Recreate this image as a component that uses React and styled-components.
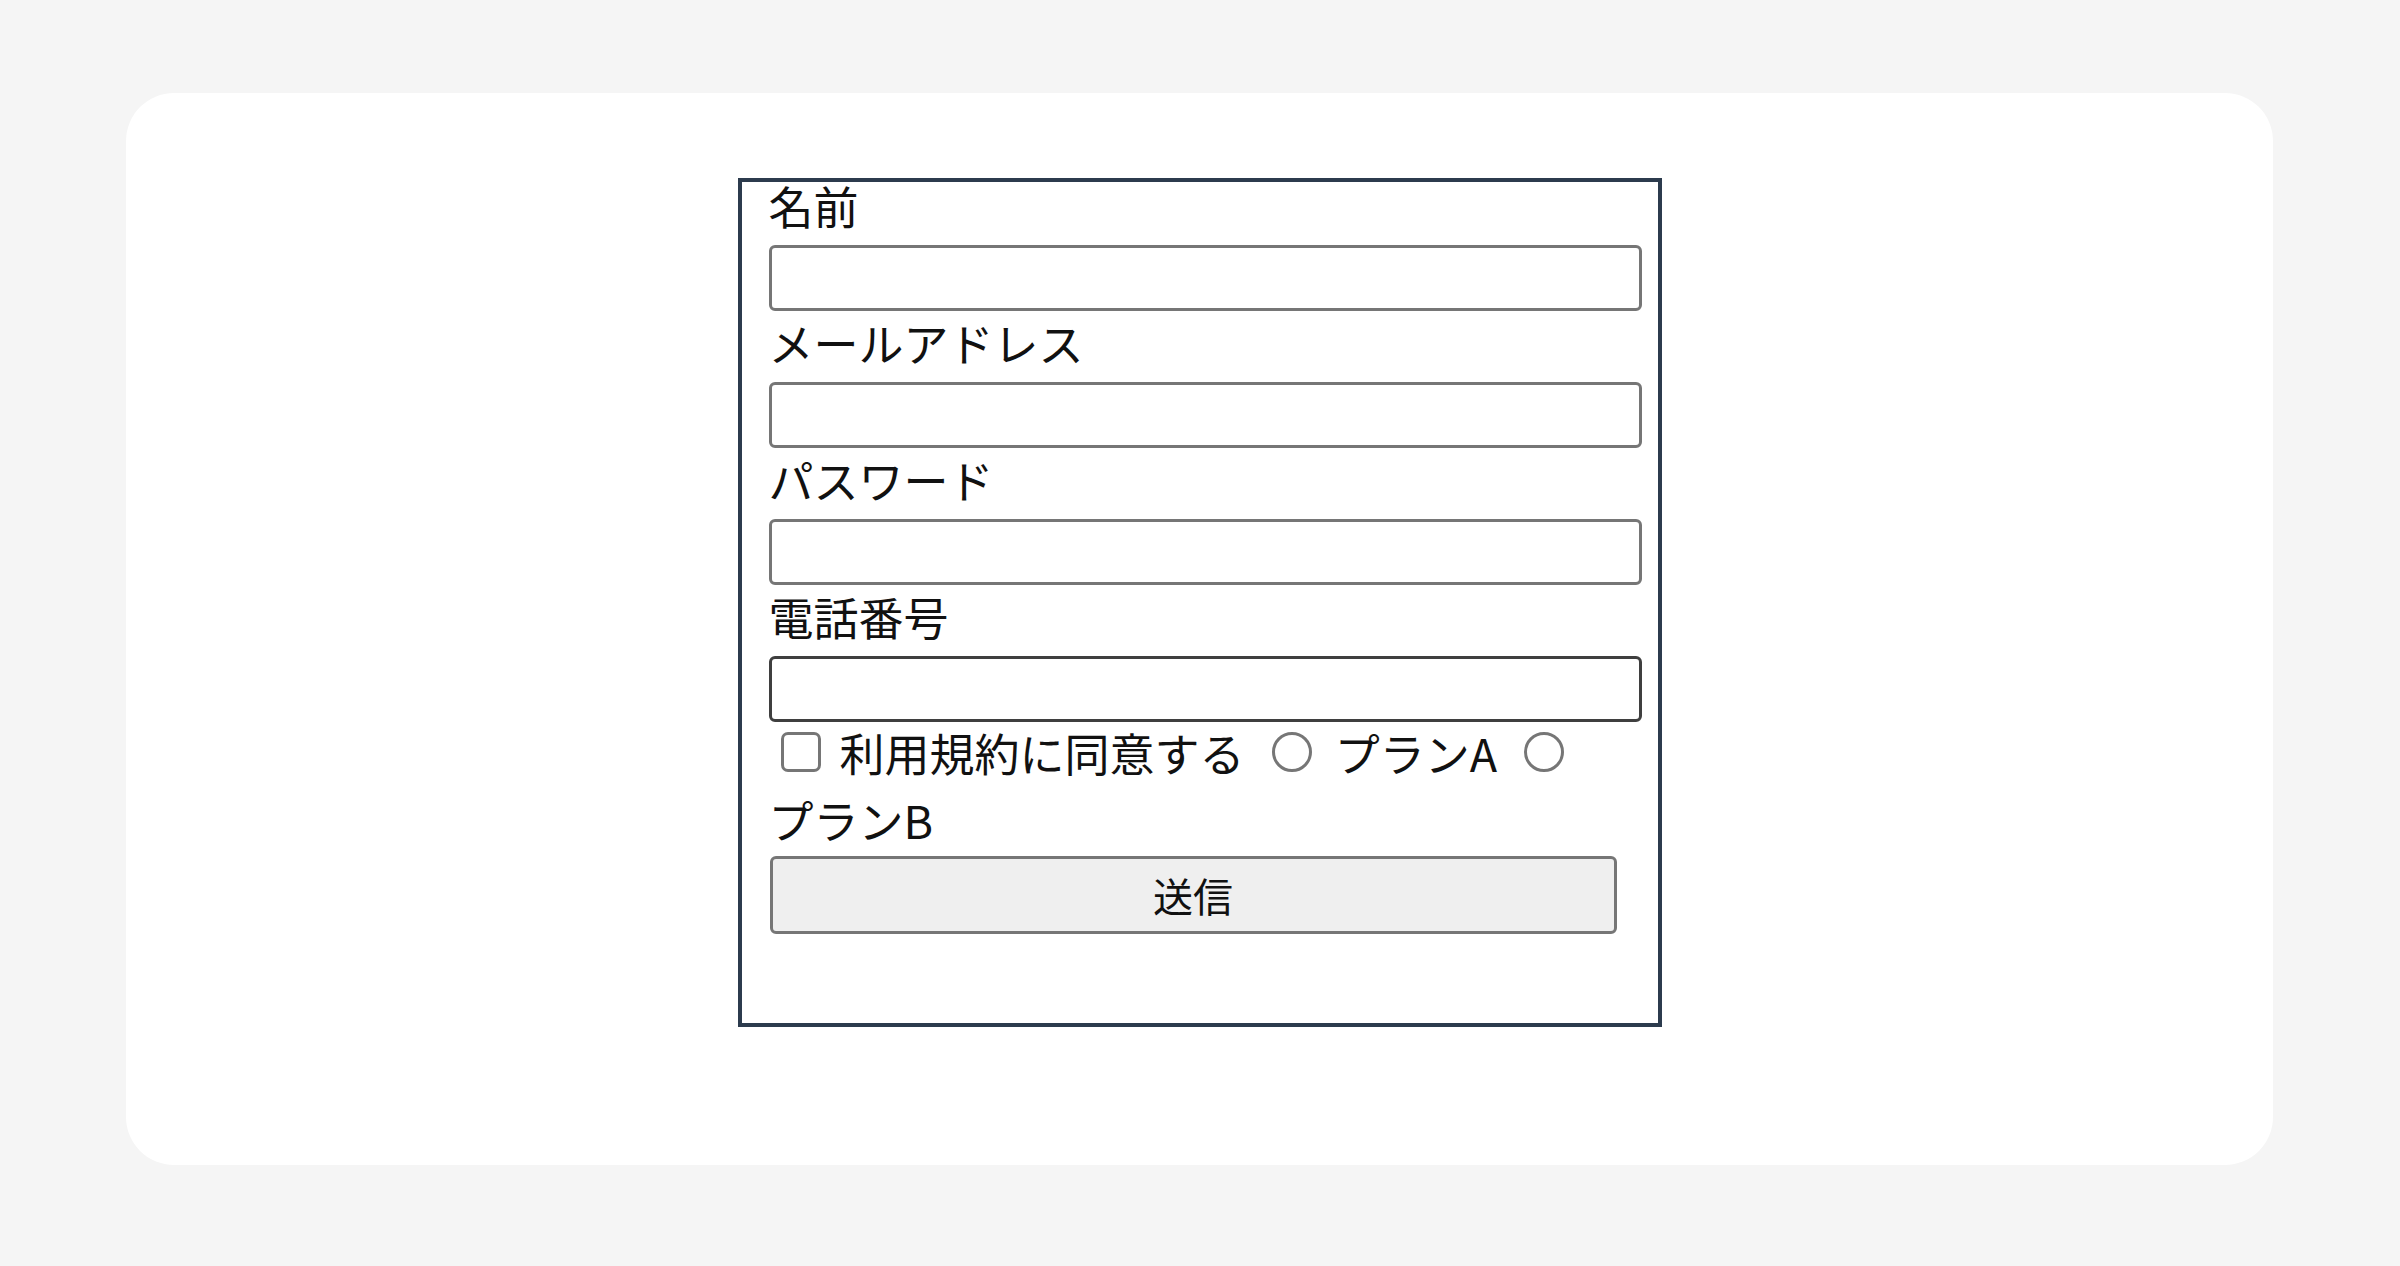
import styled, { createGlobalStyle } from "styled-components";

const GlobalStyle = createGlobalStyle`
  * {
    box-sizing: border-box;
  }
  body {
    margin: 0;
    background-color: #f5f5f5;
    font-family: "Noto Sans CJK JP", "Noto Sans", sans-serif;
    color: #111;
  }
`;

const fields = [
  { id: "name", label: "名前", type: "text" },
  { id: "email", label: "メールアドレス", type: "email" },
  { id: "password", label: "パスワード", type: "password" },
  { id: "tel", label: "電話番号", type: "tel", active: true },
];

export default function App() {
  return (
    <Page>
      <GlobalStyle />
      <Card>
        <Form onSubmit={(e) => e.preventDefault()}>
          {fields.map((field) => (
            <Field key={field.id}>
              <Label htmlFor={field.id}>{field.label}</Label>
              <TextInput id={field.id} type={field.type} $active={field.active} />
            </Field>
          ))}
          <Choices>
            <Option>
              <Check type="checkbox" />
              <OptionText> 利用規約に同意する</OptionText>
            </Option>{" "}
            <Option>
              <Radio type="radio" name="plan" />
              <OptionText> プランA</OptionText>
            </Option>{" "}
            <Option>
              <Radio type="radio" name="plan" />{" "}
              <OptionText>プランB</OptionText>
            </Option>
          </Choices>
          <SubmitButton type="submit">送信</SubmitButton>
        </Form>
      </Card>
    </Page>
  );
}

const Page = styled.div`
  min-height: 1266px;
  padding: 93px 127px 101px 126px;
`;

const Card = styled.div`
  height: 1072px;
  background-color: #fff;
  border-radius: 48px;
  display: flex;
  justify-content: center;
  align-items: flex-start;
  padding-top: 85px;
`;

const Form = styled.form`
  width: 924px;
  border: 4px solid #2c3b4d;
  padding: 0 16px 89px 27px;
`;

const Field = styled.div`
  &:first-child {
    margin-top: -8px;
  }
`;

const Label = styled.label`
  display: block;
  font-size: 45px;
  line-height: 63px;
  padding-bottom: 8px;
`;

const TextInput = styled.input`
  display: block;
  width: 100%;
  height: 66px;
  margin: 0;
  border: 3px solid ${(props) => (props.$active ? "#3f3f3f" : "#767676")};
  border-radius: 6px;
  background: #fff;
  font-size: 40px;
  padding: 0 6px;
  outline: none;
`;

const Choices = styled.div`
  font-size: 45px;
  line-height: 67px;
`;

const Option = styled.label`
  cursor: pointer;
`;

const OptionText = styled.span`
  display: inline-block;
  vertical-align: top;
  line-height: 61px;
  white-space: pre;
`;

const Check = styled.input`
  appearance: none;
  display: inline-block;
  vertical-align: top;
  width: 40px;
  height: 40px;
  margin: 10px 9px 0 12px;
  border: 3px solid #767676;
  border-radius: 7px;
  background: #fff;
`;

const Radio = styled.input`
  appearance: none;
  display: inline-block;
  vertical-align: top;
  width: 40px;
  height: 40px;
  margin: 10px 13px 0 17px;
  border: 3px solid #767676;
  border-radius: 50%;
  background: #fff;
`;

const SubmitButton = styled.button`
  display: block;
  width: 847px;
  height: 78px;
  margin: 0 0 0 1px;
  background-color: #efefef;
  border: 3px solid #767676;
  border-radius: 6px;
  font-family: inherit;
  font-size: 40px;
  color: #111;
`;
